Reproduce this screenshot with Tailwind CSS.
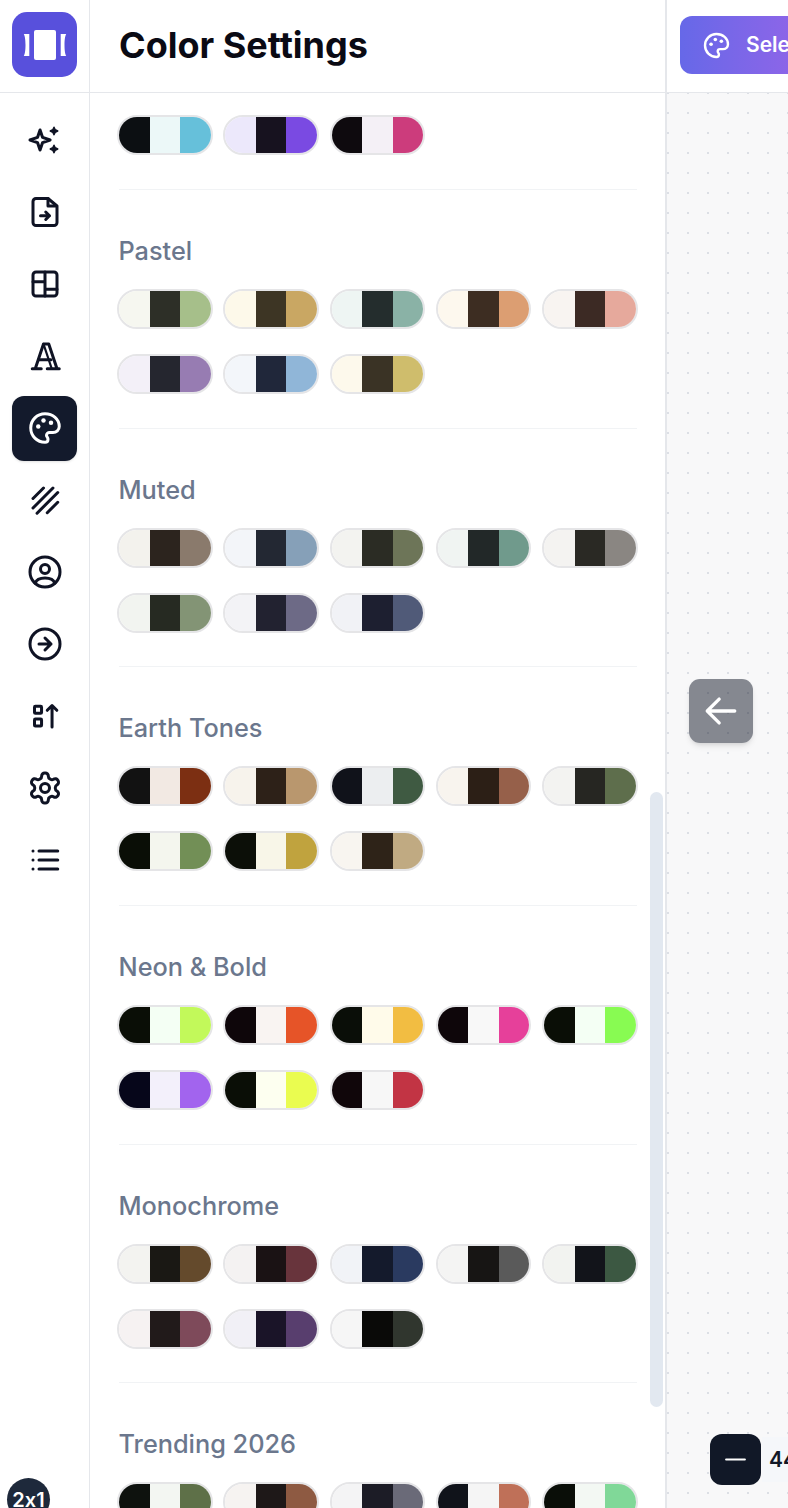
<!DOCTYPE html>
<html lang="en">
<head>
    <meta charset="UTF-8">
    <meta name="viewport" content="width=device-width, initial-scale=1.0">
    <title>Color Settings</title>
    <script src="https://cdn.jsdelivr.net/npm/@tailwindcss/browser@4"></script>
</head>
<body class="font-['Inter',sans-serif] bg-white overflow-hidden">
<div class="relative flex h-[1508px] w-[788px] overflow-hidden">

    <!-- icon rail -->
    <aside class="flex w-[90px] shrink-0 flex-col border-r border-[#e5e7eb] bg-white">
        <div class="flex h-[93px] shrink-0 items-center justify-center border-b border-[#e5e7eb] pb-[3px]">
            <div class="flex h-[65px] w-[65px] items-center justify-center rounded-[15px] bg-[#5850dc]">
                <svg class="h-[44px] w-[44px]" viewBox="0 0 44 44" fill="white">
                    <rect x="11" y="7" width="22" height="30" rx="2"/>
                    <path d="M.8 11h5.500v22H.8c1-2 1.700-5 1.700-11S1.800 13 .8 11z"/>
                    <path d="M43.200 11h-5.500v22h5.500c-1-2-1.700-5-1.700-11s.7-9 1.700-11z"/>
                </svg>
            </div>
        </div>
        <nav class="flex flex-col items-center gap-[7px] pt-[15px] text-[#0f1324] [&>button]:pb-px">
            <button class="flex h-[65px] w-[65px] items-center justify-center">
                <svg class="h-[36px] w-[36px]" viewBox="0 0 24 24" fill="none" stroke="currentColor" stroke-width="2" stroke-linejoin="round"><path d="M8.700 5.300l1.700 5 5 1.700-5 1.700-1.700 5-1.700-5-5-1.700 5-1.700z"/><path fill="currentColor" stroke-width="1" d="M18 3.500l.8 1.700 1.700.8-1.700.8-.8 1.700-.8-1.700-1.700-.8 1.700-.8zM18 15.500l.8 1.700 1.700.8-1.700.8-.8 1.700-.8-1.700-1.700-.8 1.700-.8z"/></svg>
            </button>
            <button class="flex h-[65px] w-[65px] items-center justify-center">
                <svg class="h-[36px] w-[36px]" viewBox="0 0 24 24" fill="none" stroke="currentColor" stroke-width="2" stroke-linecap="round" stroke-linejoin="round"><path d="M14 3H6a2 2 0 0 0-2 2v14a2 2 0 0 0 2 2h12a2 2 0 0 0 2-2V8z"/><path d="M14 3v5h5"/><path d="M9 14.500h6M12.500 12l2.500 2.500-2.500 2.500"/></svg>
            </button>
            <button class="flex h-[65px] w-[65px] items-center justify-center">
                <svg class="h-[36px] w-[36px]" viewBox="0 0 24 24" fill="none" stroke="currentColor" stroke-width="2" stroke-linecap="round" stroke-linejoin="round"><rect x="4" y="4" width="16" height="16" rx="2"/><path d="M4 10.500h8M12 4v16M12 15.500h8"/></svg>
            </button>
            <button class="flex h-[65px] w-[65px] items-center justify-center">
                <svg class="h-[36px] w-[36px]" viewBox="0 0 24 24" fill="none" stroke="currentColor" stroke-width="2" stroke-linecap="round" stroke-linejoin="round"><path d="M3.500 20.500h6M13.500 20.500h8M5.500 20.500L11 4h3.500L20 20.500"/><path d="M8 14.500h8"/><path d="M11 4l5.500 16.500" stroke-width="1.500"/></svg>
            </button>
            <button class="flex h-[65px] w-[65px] items-center justify-center rounded-[12px] bg-[#131a2c] text-white shadow-sm">
                <svg class="h-[36px] w-[36px]" viewBox="0 0 24 24" fill="none" stroke="currentColor" stroke-width="2" stroke-linecap="round" stroke-linejoin="round"><path d="M12 2.500C6.700 2.500 2.500 6.700 2.500 12s4.200 9.500 9.500 9.500c1.300 0 2-1 2-2 0-.6-.3-1-.5-1.400-.3-.4-.5-.8-.5-1.300 0-1 .9-1.800 2-1.800h2.300c2.300 0 4.200-1.700 4.200-4C21.500 6 17.200 2.500 12 2.500z"/><circle cx="7.500" cy="11" r="1.500" fill="currentColor" stroke="none"/><circle cx="11" cy="7" r="1.500" fill="currentColor" stroke="none"/><circle cx="16" cy="8.500" r="1.500" fill="currentColor" stroke="none"/></svg>
            </button>
            <button class="flex h-[65px] w-[65px] items-center justify-center">
                <svg class="h-[36px] w-[36px]" viewBox="0 0 24 24" fill="none" stroke="currentColor" stroke-width="2" stroke-linecap="round"><path d="M4 11L11 4M4 17.300L17.300 4M6.700 20.800L20.500 7M13.500 20.500l7-7"/></svg>
            </button>
            <button class="flex h-[65px] w-[65px] items-center justify-center">
                <svg class="h-[36px] w-[36px]" viewBox="0 0 24 24" fill="none" stroke="currentColor" stroke-width="2" stroke-linecap="round" stroke-linejoin="round"><circle cx="12" cy="12" r="10"/><circle cx="12" cy="10" r="3"/><path d="M5.500 19.500c.8-2.500 3-3.500 6.500-3.500s5.700 1 6.500 3.500"/></svg>
            </button>
            <button class="flex h-[65px] w-[65px] items-center justify-center">
                <svg class="h-[36px] w-[36px]" viewBox="0 0 24 24" fill="none" stroke="currentColor" stroke-width="2" stroke-linecap="round" stroke-linejoin="round"><circle cx="12" cy="12" r="10"/><path d="M8 12h8M12 8l4 4-4 4"/></svg>
            </button>
            <button class="flex h-[65px] w-[65px] items-center justify-center">
                <svg class="h-[36px] w-[36px]" viewBox="0 0 24 24" fill="none" stroke="currentColor" stroke-width="2" stroke-linecap="round" stroke-linejoin="round"><rect x="5" y="5.500" width="4.700" height="4.700" rx=".6"/><rect x="5" y="14" width="4.700" height="4.700" rx=".6"/><path d="M16.700 19.300V5M13.500 8.200l3.200-3.200 3.200 3.200"/></svg>
            </button>
            <button class="flex h-[65px] w-[65px] items-center justify-center">
                <svg class="h-[36px] w-[36px]" viewBox="0 0 24 24" fill="none" stroke="currentColor" stroke-width="2" stroke-linecap="round" stroke-linejoin="round"><path d="M12.220 2h-.44a2 2 0 0 0-2 2v.18a2 2 0 0 1-1 1.730l-.43.250a2 2 0 0 1-2 0l-.150-.080a2 2 0 0 0-2.730.730l-.220.380a2 2 0 0 0 .730 2.730l.150.100a2 2 0 0 1 1 1.720v.510a2 2 0 0 1-1 1.740l-.150.090a2 2 0 0 0-.730 2.730l.220.380a2 2 0 0 0 2.730.730l.150-.080a2 2 0 0 1 2 0l.430.250a2 2 0 0 1 1 1.730V20a2 2 0 0 0 2 2h.44a2 2 0 0 0 2-2v-.18a2 2 0 0 1 1-1.730l.430-.250a2 2 0 0 1 2 0l.150.080a2 2 0 0 0 2.730-.730l.220-.390a2 2 0 0 0-.730-2.730l-.150-.080a2 2 0 0 1-1-1.740v-.500a2 2 0 0 1 1-1.740l.150-.090a2 2 0 0 0 .730-2.730l-.220-.380a2 2 0 0 0-2.730-.730l-.150.080a2 2 0 0 1-2 0l-.430-.250a2 2 0 0 1-1-1.730V4a2 2 0 0 0-2-2z"/><circle cx="12" cy="12" r="3"/></svg>
            </button>
            <button class="flex h-[65px] w-[65px] items-center justify-center">
                <svg class="h-[36px] w-[36px]" viewBox="0 0 24 24" fill="none" stroke="currentColor" stroke-width="2" stroke-linecap="round"><path d="M8 6h12.500M8 12h12.500M8 18h12.500M4 6h.01M4 12h.01M4 18h.01"/></svg>
            </button>
        </nav>
    </aside>

    <!-- colour panel -->
    <section class="flex w-[577px] shrink-0 flex-col border-r-2 border-[#e5e7eb] bg-white">
        <header class="flex h-[93px] shrink-0 items-center border-b border-[#e5e7eb] pb-[2px] pl-[29px]">
            <h1 class="text-[36px] font-bold text-[#0a0a14]">Color Settings</h1>
        </header>
        <div id="sections" class="ml-[29px] w-[518px] pt-[22px]"></div>
    </section>

    <!-- canvas side -->
    <main class="flex flex-1 flex-col bg-white">
        <div class="flex h-[93px] shrink-0 items-center border-b border-[#e5e7eb] pb-[2px] pl-[13px]">
            <button class="flex h-[58px] w-[240px] shrink-0 items-center gap-[15px] rounded-[12px] bg-gradient-to-r from-[#6668e8] to-[#b35ee8] pl-[22px] text-[21px] font-semibold text-white">
                <svg class="h-[29px] w-[29px] shrink-0" viewBox="0 0 24 24" fill="none" stroke="currentColor" stroke-width="2" stroke-linecap="round" stroke-linejoin="round"><path d="M12 2.500C6.700 2.500 2.500 6.700 2.500 12s4.200 9.500 9.500 9.500c1.300 0 2-1 2-2 0-.6-.3-1-.5-1.400-.3-.4-.5-.8-.5-1.300 0-1 .9-1.800 2-1.800h2.300c2.300 0 4.200-1.700 4.200-4C21.500 6 17.200 2.500 12 2.500z"/><circle cx="7.500" cy="11" r="1.500" fill="currentColor" stroke="none"/><circle cx="11" cy="7" r="1.500" fill="currentColor" stroke="none"/><circle cx="16" cy="8.500" r="1.500" fill="currentColor" stroke="none"/></svg>
                <span>Select</span>
            </button>
        </div>
        <div class="flex-1 bg-[#f8f8f9] bg-[radial-gradient(#dcdfe5_1px,transparent_1.500px)] bg-[size:20px_20px] bg-[position:-9px_-10px]"></div>
    </main>

    <!-- overlays -->
    <div class="absolute left-[650px] top-[792px] h-[615px] w-[13px] rounded-full bg-[#e2e8f0]"></div>
    <button class="absolute left-[689px] top-[679px] flex h-[64px] w-[64px] items-center justify-center rounded-[11px] bg-[#111827]/50 text-white shadow-md">
        <svg class="h-[44px] w-[44px]" viewBox="0 0 24 24" fill="none" stroke="currentColor" stroke-width="1.800" stroke-linecap="round" stroke-linejoin="round"><path d="M19.500 12H4.500M11 5.500L4.500 12l6.500 6.500"/></svg>
    </button>
    <div class="absolute left-[710px] top-[1434px] flex items-center">
        <button class="flex h-[51px] w-[51px] items-center justify-center rounded-[12px] bg-[#111827] text-white">
            <svg class="h-[25px] w-[25px]" viewBox="0 0 24 24" fill="none" stroke="currentColor" stroke-width="2" stroke-linecap="round"><path d="M3 12h18"/></svg>
        </button>
        <div class="ml-px flex h-[45px] w-[60px] items-center rounded-r-[8px] bg-[#f5f7fa] pl-[7px] text-[21px] font-semibold text-[#111827]">44%</div>
    </div>
    <div class="absolute left-[7px] top-[1478px] flex h-[43px] w-[43px] justify-center rounded-full bg-[#1e293b] pt-[10px] text-[20px] font-semibold leading-[24px] text-white [font-feature-settings:'calt'_0]">2x1</div>
</div>

<script>
    // palettes as [left, middle, right]; the first group is the tail of a section scrolled off the top
    const groups = [
        { title: null, items: [['#0c0f12','#ecf8f8','#66c0da'],['#ece8fb','#17121f','#7a4ae2'],['#0e0a0e','#f4f0f6','#cc3c7c']] },
        { title: 'Pastel', items: [['#f6f7f0','#2d2f27','#a6bf8a'],['#fdf9ea','#3d3524','#c9a763'],['#eef5f3','#242d2d','#8ab2a6'],['#fdf8ee','#3d2d22','#dc9e72'],['#f8f4f1','#3c2a24','#e6a99c'],['#f3f0f8','#25262f','#977cb2'],['#f3f6fa','#20273a','#90b6d8'],['#fdf9ec','#3a3325','#cfbd6c']] },
        { title: 'Muted', items: [['#f3f2ed','#2c241e','#8a7a6c'],['#f3f5f9','#232833','#86a0b8'],['#f3f3f0','#2b2c24','#6d7558'],['#f0f4f2','#222828','#709a8c'],['#f4f3f1','#2a2924','#8a8682'],['#f2f4f0','#262a22','#839475'],['#f3f3f6','#222230','#6d6a86'],['#f1f2f6','#1d1f30','#505a78']] },
        { title: 'Earth Tones', items: [['#121212','#f2e9e3','#7c2f12'],['#f7f3ec','#2d2118','#b9976e'],['#10121a','#eceef0','#3f5a42'],['#f8f4ee','#2c1f16','#96604a'],['#f3f3f1','#262622','#5e6e4c'],['#0a0e06','#f4f6ee','#728f56'],['#0c0f08','#f8f6e8','#c0a33e'],['#f8f5f0','#2e2318','#c0aa82']] },
        { title: 'Neon & Bold', items: [['#0a0e06','#f4fff4','#c2f95a'],['#0e060a','#f9f4f2','#e65428'],['#0a0e08','#fffbea','#f2bd42'],['#0e060a','#f8f8f8','#e6409a'],['#0a0e06','#f4fff4','#88fb52'],['#06061a','#f3f0fb','#a264ee'],['#0a0e06','#fdfff0','#eafc50'],['#10060a','#f7f7f7','#c23444']] },
        { title: 'Monochrome', items: [['#f3f3f0','#1a1814','#644a2c'],['#f4f2f2','#1a1214','#68343c'],['#f1f3f7','#141a2c','#2a3a60'],['#f4f4f3','#171514','#5a5a5a'],['#f2f3f0','#12141a','#3c5842'],['#f6f2f2','#211a1a','#7e4a5a'],['#f1f0f6','#1a1428','#583e6e'],['#f6f6f6','#0a0a08','#30362e']] },
        { title: 'Trending 2026', items: [['#0e120e','#f3f6f2','#5e7048'],['#f6f3f1','#1e1818','#8e5a42'],['#f4f4f5','#1c1c26','#6a6a78'],['#10131a','#f5f5f5','#bf7058'],['#0a0e08','#f3f8f3','#80d898']] },
    ];

    const root = document.getElementById('sections');
    groups.forEach((group, i) => {
        const sec = document.createElement('div');
        sec.className = i === 0 ? 'pb-[34.200px] border-b border-[#f1f3f5]' : 'pt-[42px] pb-[33.600px] border-b border-[#f1f3f5]';
        if (group.title) {
            const h = document.createElement('h3');
            h.className = 'mb-[19px] ml-[-0.5px] text-[25.300px] leading-[38px] font-medium text-[#6b778d]';
            h.textContent = group.title;
            sec.appendChild(h);
        }
        const grid = document.createElement('div');
        grid.className = 'ml-[-2px] grid grid-cols-[repeat(5,95.5px)] gap-x-[10.750px] gap-y-[25px]';
        group.items.forEach(colors => {
            const pill = document.createElement('div');
            pill.className = 'flex h-[40px] overflow-hidden rounded-full border-2 border-[#e5e5e7]';
            colors.forEach(c => {
                const seg = document.createElement('div');
                seg.className = 'flex-1';
                seg.style.backgroundColor = c;
                pill.appendChild(seg);
            });
            grid.appendChild(pill);
        });
        sec.appendChild(grid);
        root.appendChild(sec);
    });
</script>
</body>
</html>
